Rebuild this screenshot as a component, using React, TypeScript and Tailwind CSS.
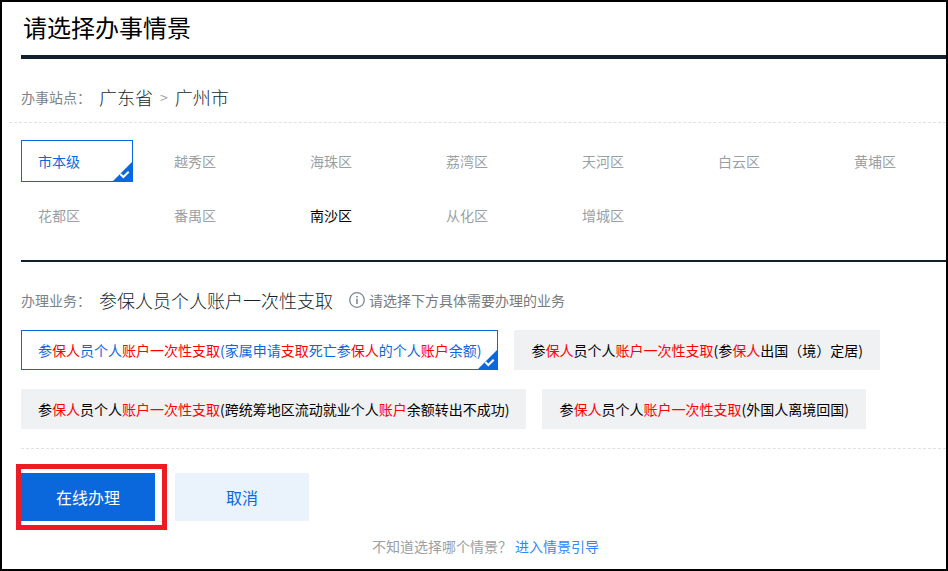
import { ReactElement, useState } from "react";

const districts: string[] = [
  "市本级", "越秀区", "海珠区", "荔湾区", "天河区", "白云区", "黄埔区",
  "花都区", "番禺区", "南沙区", "从化区", "增城区",
];
const openDistricts: string[] = ["市本级", "南沙区"];

const services: string[] = [
  "参保人员个人账户一次性支取(家属申请支取死亡参保人的个人账户余额)",
  "参保人员个人账户一次性支取(参保人出国（境）定居)",
  "参保人员个人账户一次性支取(跨统筹地区流动就业个人账户余额转出不成功)",
  "参保人员个人账户一次性支取(外国人离境回国)",
];
const keywords = /(保人|账户一次性支取|账户|支取)/;

const CheckCorner = (): ReactElement => (
  <svg className="absolute -right-px -bottom-px" width="21" height="21" viewBox="0 0 21 21" aria-hidden="true">
    <path d="M21 0V21H0Z" fill="#0b68dc" />
    <path d="M8.3 13L11.3 16L16.7 10.8" fill="none" stroke="#fff" strokeWidth="2" />
  </svg>
);

const InfoIcon = (): ReactElement => (
  <svg width="16" height="16" viewBox="0 0 16 16" aria-hidden="true">
    <circle cx="8" cy="8" r="7.3" fill="none" stroke="#808890" strokeWidth="1.3" />
    <path d="M7.2 4H8.8V5.5H7.2ZM7.2 6.8H8.8V12H7.2Z" fill="#808890" />
  </svg>
);

// every second part of the split is a matched keyword
const Highlighted = ({ text }: { text: string }): ReactElement => (
  <>
    {text.split(keywords).map((part, index) => (
      index % 2 ? <span className="text-[#ff0000]" key={index}>{part}</span> : part
    ))}
  </>
);

type PickerType = {
  selected: string,
  setSelected: (value: string) => void,
}

const DistrictList = ({ selected, setSelected }: PickerType): ReactElement => {
  const textColor = (name: string): string => {
    if (name === selected) return "border-[#0b68dc] text-[#0b68dc]";
    return openDistricts.includes(name) ? "border-transparent text-black" : "border-transparent text-[#9a9fa5]";
  };
  return (
    <div className="-mr-[3px] grid grid-cols-7 gap-x-6 gap-y-3 pt-[17px] pb-6">
      {districts.map((name) => (
        <button
          type="button"
          key={name}
          aria-pressed={name === selected}
          onClick={() => setSelected(name)}
          className={`relative h-[42px] border px-4 text-left ${textColor(name)}`}
        >
          {name}
          {name === selected && <CheckCorner />}
        </button>
      ))}
    </div>
  );
};

const ServiceList = ({ selected, setSelected }: PickerType): ReactElement => (
  <div className="flex flex-wrap gap-x-4 gap-y-[19px] pb-[19px]">
    {services.map((name) => (
      <button
        type="button"
        key={name}
        aria-pressed={name === selected}
        onClick={() => setSelected(name)}
        className={`relative h-10 border px-4 text-left ${name === selected ? "border-[#0b68dc] bg-white text-[#0b68dc]" : "border-[#f0f1f3] bg-[#f0f1f3] text-black"}`}
      >
        <Highlighted text={name} />
        {name === selected && <CheckCorner />}
      </button>
    ))}
  </div>
);

function App(): ReactElement {
  const [district, setDistrict] = useState<string>(districts[0]);
  const [service, setService] = useState<string>(services[0]);
  return (
    <main className="min-h-screen overflow-hidden border-2 border-black bg-white pl-[19px] font-['Noto_Sans_CJK_SC',sans-serif] text-sm">
      <h1 className="border-b-4 border-[#121f2e] pt-[7px] pb-2.5 pl-0.5 text-2xl leading-9 font-normal text-black">请选择办事情景</h1>

      <div className="-ml-3 flex items-center border-b border-dashed border-[#dfe1e3] pt-6 pb-[11px] pl-3">
        <span className="mr-2 text-[#7a828a]">办事站点：</span>
        <span className="text-lg font-light text-[#121f2e]">广东省</span>
        <span className="mx-[7px] text-[#9a9fa5]">&gt;</span>
        <span className="text-lg font-light text-[#121f2e]">广州市</span>
      </div>

      <DistrictList selected={district} setSelected={setDistrict} />

      <section className="border-t-2 border-[#121f2e] pt-6">
        <div className="mb-4 flex items-center">
          <span className="mr-2 text-[#7a828a]">办理业务：</span>
          <h2 className="mr-4 text-lg font-light text-[#121f2e]">参保人员个人账户一次性支取</h2>
          <InfoIcon />
          <span className="ml-1 text-[#7a7a7a]">请选择下方具体需要办理的业务</span>
        </div>
        <ServiceList selected={service} setSelected={setService} />
      </section>

      <div className="border-t border-dashed border-[#dfe1e3] pt-6">
        <div className="flex gap-5 text-base">
          <div className="relative">
            <button type="button" className="h-12 w-[134px] bg-[#0b68dc] text-white">在线办理</button>
            <div className="pointer-events-none absolute -top-[9px] -right-3 -bottom-[9px] -left-[5px] border-[5px] border-[#ed1c24]" />
          </div>
          <button type="button" className="h-12 w-[134px] bg-[#eaf3fc] text-[#0b68dc]">取消</button>
        </div>
        <p className="mt-[15px] pl-1 text-center text-[#9a9fa5]">
          不知道选择哪个情景？ <a href="#guide" className="text-[#3089f8]">进入情景引导</a>
        </p>
      </div>
    </main>
  );
}

export default App;
